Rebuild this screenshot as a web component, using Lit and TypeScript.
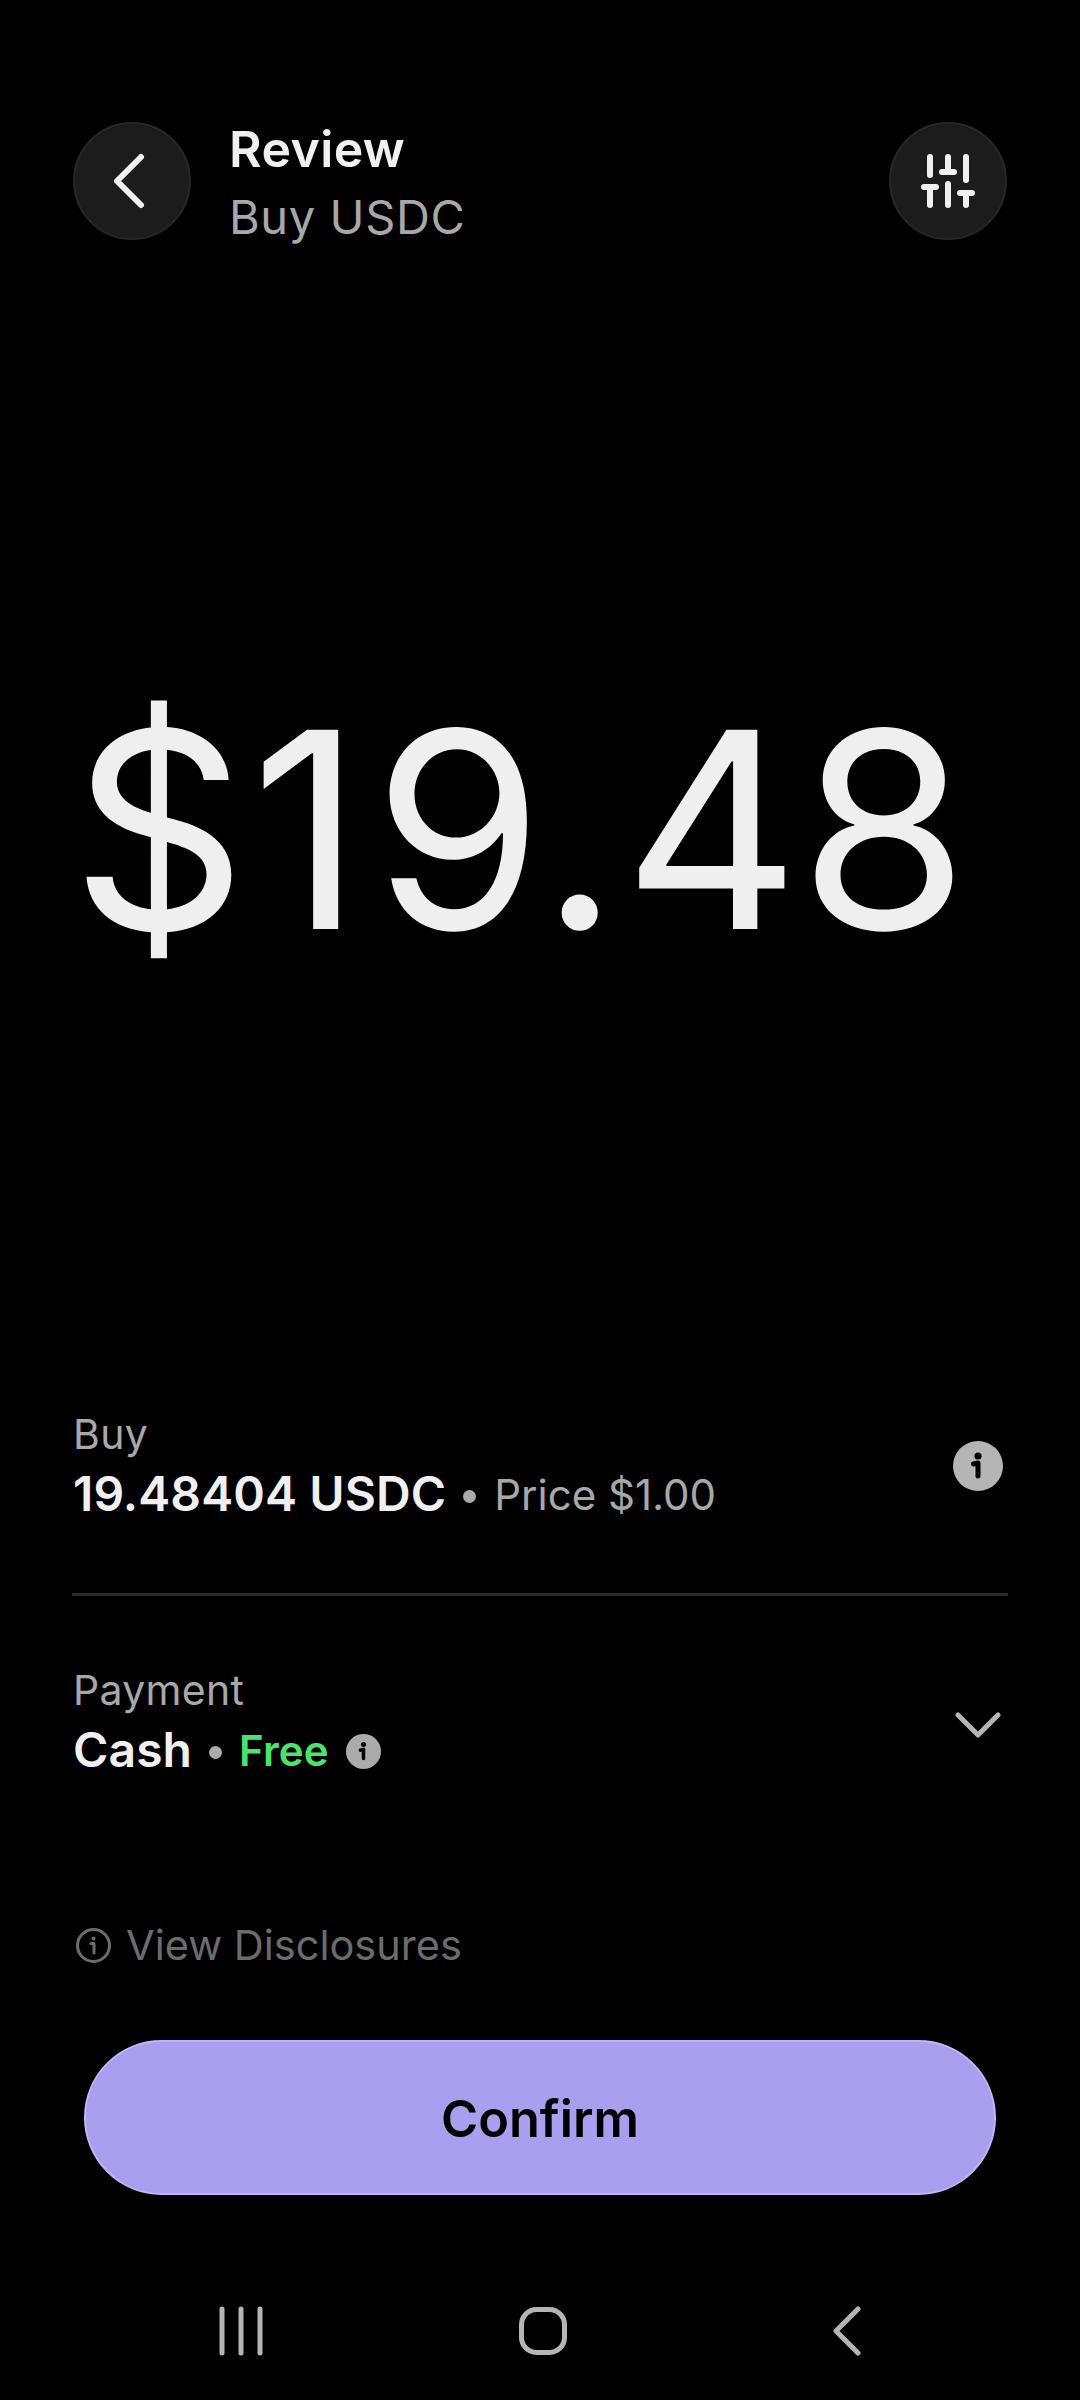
import { LitElement, html, css, svg } from "lit";
import { customElement } from "lit/decorators.js";

const infoGlyph = svg`
  <circle cx="25" cy="15" r="3.6" fill="#000" />
  <path d="M20.5 23 L25 22 V35" fill="none" stroke="#000" stroke-width="5" stroke-linecap="round" stroke-linejoin="round" />
`;

@customElement("app-root")
export class AppRoot extends LitElement {
  static styles = css`
    :host {
      display: block;
      width: 1080px;
      height: 2400px;
      background: #000;
      color: #f0f0f0;
      font-family: Inter, "Liberation Sans", sans-serif;
      overflow: hidden;
    }
    svg {
      display: block;
      flex: none;
    }
    .page {
      height: 2400px;
      box-sizing: border-box;
      padding: 122px 73px 0;
    }
    .top {
      display: flex;
      align-items: center;
      height: 118px;
    }
    .round {
      flex: none;
      width: 118px;
      height: 118px;
      box-sizing: border-box;
      border-radius: 50%;
      background: #1c1c1c;
      border: 2px solid #262626;
      display: flex;
      align-items: center;
      justify-content: center;
    }
    .titles {
      flex: 1;
      margin-left: 38px;
      display: flex;
      flex-direction: column;
    }
    .title {
      font-size: 50px;
      line-height: 68px;
      font-weight: 600;
      letter-spacing: 0.4px;
      margin-top: 3px;
    }
    .sub {
      font-size: 47px;
      line-height: 68px;
      color: #a8a8a8;
      letter-spacing: 0.6px;
    }
    .amount {
      height: 260px;
      margin-top: 460px;
      margin-left: -2px;
      font-size: 274px;
      line-height: 260px;
      letter-spacing: 4px;
      white-space: nowrap;
      color: #efefef;
    }
    .wide {
      letter-spacing: 11px;
    }
    .tight {
      letter-spacing: -1px;
    }
    .row {
      display: flex;
      align-items: center;
      justify-content: space-between;
    }
    .row-buy {
      margin-top: 446px;
      height: 120px;
    }
    .row-pay {
      margin-top: 66px;
      height: 120px;
    }
    .label {
      font-size: 41px;
      line-height: 54px;
      margin-top: 2px;
      letter-spacing: 0.3px;
      color: #a8a8a8;
    }
    .value {
      display: flex;
      align-items: center;
      font-size: 48px;
      line-height: 64px;
      font-weight: 600;
      letter-spacing: 0.1px;
    }
    .dot {
      width: 13px;
      height: 13px;
      border-radius: 50%;
      background: #ababab;
      margin: 5px 17px 0 17px;
    }
    .price {
      font-size: 42px;
      font-weight: 400;
      color: #a8a8a8;
      letter-spacing: 0;
      margin: 2px 0 0 1px;
    }
    .free {
      font-size: 42px;
      font-weight: 600;
      color: #4ce26e;
      margin-top: 2px;
    }
    .info-sm {
      margin: 2px 0 0 17px;
    }
    .info-lg {
      margin-right: 4px;
    }
    .chev {
      margin: 6px 6px 0 0;
    }
    .rule {
      height: 3px;
      background: #2a2a2a;
      margin: 67px -1px 0;
    }
    .links {
      display: flex;
      align-items: center;
      gap: 15px;
      margin-top: 135px;
      margin-left: 3px;
      font-size: 41.5px;
      line-height: 56px;
      color: #6c6c6c;
    }
    .cta {
      margin: 67px 11px 0;
      height: 155px;
      box-sizing: border-box;
      padding-top: 1px;
      border-radius: 78px;
      background: #aa9eef;
      border: 2px solid #c0b8f4;
      color: #000;
      font-size: 50.5px;
      font-weight: 600;
      display: flex;
      align-items: center;
      justify-content: center;
    }
    .nav {
      display: flex;
      align-items: center;
      margin-top: 111px;
      padding-left: 146px;
      height: 50px;
    }
    .nav-home {
      margin-left: 255px;
    }
    .nav-back {
      margin-left: 263px;
    }
  `;

  render() {
    return html`
      <div class="page">
        <div class="top">
          <div class="round">
            <svg width="114" height="114" viewBox="2 2 114 114">
              <path d="M68 35 L44 59 L68 83" fill="none" stroke="#f0f0f0" stroke-width="6" stroke-linecap="round" stroke-linejoin="round" />
            </svg>
          </div>
          <div class="titles">
            <div class="title">Review</div>
            <div class="sub">Buy USDC</div>
          </div>
          <div class="round">
            <svg width="114" height="114" viewBox="2 2 114 114">
              <g fill="none" stroke="#f0f0f0" stroke-width="6" stroke-linecap="round">
                <path d="M41 35 V53 M59 35 V50 M77 35 V58" />
                <path d="M41 68 V83 M59 62 V83 M77 74 V83" />
                <path d="M35 65 H47 M53 50 H65 M71 71 H83" />
              </g>
            </svg>
          </div>
        </div>

        <div class="amount">$<span class="wide">1</span>9.<span class="tight">4</span>8</div>

        <div class="row row-buy">
          <div>
            <div class="label">Buy</div>
            <div class="value">
              19.48404 USDC<span class="dot"></span><span class="price">Price $1.00</span>
            </div>
          </div>
          <svg class="info-lg" width="50" height="50" viewBox="0 0 50 50">
            <circle cx="25" cy="25" r="25" fill="#b5b5b5" />
            ${infoGlyph}
          </svg>
        </div>
        <div class="rule"></div>

        <div class="row row-pay">
          <div>
            <div class="label">Payment</div>
            <div class="value">
              Cash<span class="dot"></span><span class="free">Free</span>
              <svg class="info-sm" width="35" height="35" viewBox="0 0 50 50">
                <circle cx="25" cy="25" r="25" fill="#ababab" />
                ${infoGlyph}
              </svg>
            </div>
          </div>
          <svg class="chev" width="46" height="26" viewBox="0 0 46 26">
            <path d="M3 3 L23 23 L43 3" fill="none" stroke="#b5b5b5" stroke-width="5" stroke-linecap="round" stroke-linejoin="round" />
          </svg>
        </div>

        <div class="links">
          <svg width="35" height="35" viewBox="0 0 35 35">
            <circle cx="17.5" cy="17.5" r="16" fill="none" stroke="#6c6c6c" stroke-width="3" />
            <circle cx="17.5" cy="10.5" r="2" fill="#6c6c6c" />
            <path d="M15 15.5 H18 V25" fill="none" stroke="#6c6c6c" stroke-width="3" stroke-linecap="round" stroke-linejoin="round" />
          </svg>
          <span>View Disclosures</span>
        </div>

        <div class="cta">Confirm</div>

        <div class="nav">
          <svg width="44" height="50" viewBox="0 0 44 50">
            <path d="M3 3 V47 M22 3 V47 M41 3 V47" fill="none" stroke="#b5b5b5" stroke-width="5" stroke-linecap="round" />
          </svg>
          <svg class="nav-home" width="50" height="50" viewBox="0 0 50 50">
            <rect x="3.5" y="3.5" width="43" height="43" rx="15" fill="none" stroke="#b5b5b5" stroke-width="5" />
          </svg>
          <svg class="nav-back" width="30" height="50" viewBox="0 0 30 50">
            <path d="M27 3 L5 25 L27 47" fill="none" stroke="#b5b5b5" stroke-width="5" stroke-linecap="round" stroke-linejoin="round" />
          </svg>
        </div>
      </div>
    `;
  }
}
